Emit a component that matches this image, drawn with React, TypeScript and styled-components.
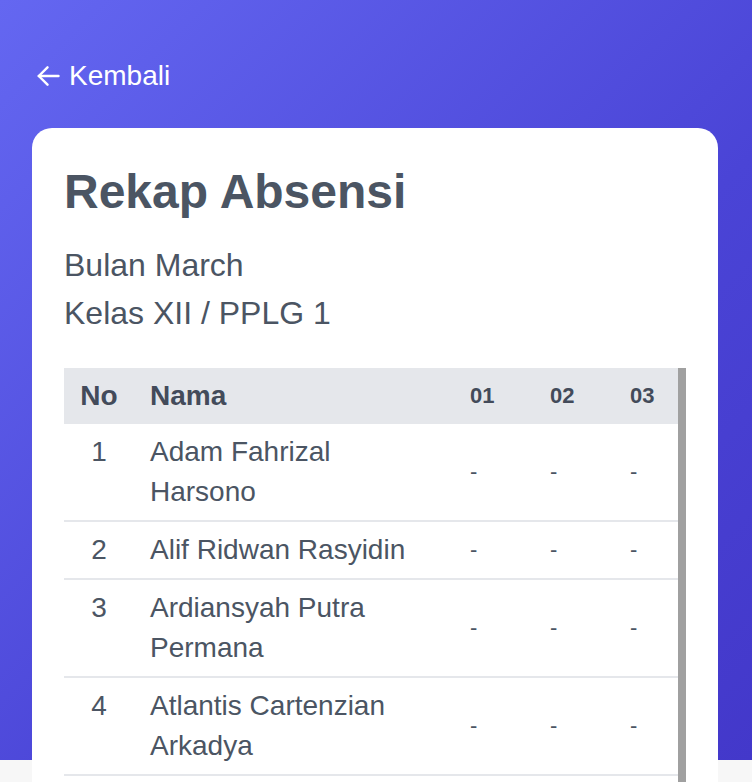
import React from "react";
import styled, { createGlobalStyle } from "styled-components";

const GlobalStyle = createGlobalStyle`
  html, body {
    margin: 0;
    padding: 0;
  }
  body {
    font-family: "Liberation Sans", Arial, Helvetica, sans-serif;
    background: #f7f7f7;
  }
  * { box-sizing: border-box; }
`;

const Page = styled.div`
  min-height: 782px;
  padding: 56px 34px 0 32px;
  background:
    linear-gradient(135deg, #6467f1 0%, #4a44d6 60%, #4338ca 100%) top left / 100% 760px no-repeat,
    #f7f7f7;
`;

const BackLink = styled.a`
  display: inline-flex;
  align-items: center;
  gap: 9px;
  margin-left: 5px;
  color: #ffffff;
  font-size: 28px;
  line-height: 40px;
  text-decoration: none;
  cursor: pointer;
`;

const Card = styled.section`
  margin-top: 32px;
  background: #ffffff;
  border-radius: 20px;
  padding: 32px;
`;

const Title = styled.h1`
  margin: 0;
  font-size: 48px;
  line-height: 64px;
  font-weight: 700;
  color: #4b5563;
`;

const Meta = styled.p`
  margin: 17px 0 0 0;
  font-size: 32px;
  line-height: 48px;
  color: #4b5563;
`;

const TableWrap = styled.div`
  margin-top: 31px;
  padding-bottom: 40px;
  overflow: hidden;
  border-right: 8px solid #a0a0a0;
`;

const Table = styled.table`
  width: 100%;
  table-layout: fixed;
  border-collapse: collapse;
`;

const HeadRow = styled.tr`
  background: #e5e7eb;
`;

const Th = styled.th<{ $align?: string; $small?: boolean; $pad?: number }>`
  padding: 8px 0 8px ${(p) => p.$pad ?? 0}px;
  text-align: ${(p) => p.$align ?? "left"};
  font-size: ${(p) => (p.$small ? 22 : 28)}px;
  line-height: 40px;
  font-weight: 700;
  color: #434b5a;
  white-space: nowrap;
`;

const Row = styled.tr`
  border-bottom: 2px solid #e5e7eb;
`;

const NoCell = styled.td`
  padding: 8px 0;
  text-align: center;
  vertical-align: top;
  font-size: 28px;
  line-height: 40px;
  color: #4b5563;
`;

const NameCell = styled.td`
  padding: 8px 16px;
  vertical-align: top;
  font-size: 28px;
  line-height: 40px;
  color: #4b5563;
`;

const DayCell = styled.td`
  padding: 8px 0 8px 28px;
  vertical-align: middle;
  font-size: 22px;
  line-height: 40px;
  color: #4b5563;
`;

const ArrowIcon = () => (
  <svg width="23" height="20" viewBox="0 0 23 20" fill="none" stroke="currentColor" strokeWidth="2.4" strokeLinecap="round" strokeLinejoin="round">
    <path d="M21.5 10H1.8" />
    <path d="M10.5 1.3 1.8 10l8.7 8.7" />
  </svg>
);

const days = ["01", "02", "03"];

const students = [
  { no: 1, name: "Adam Fahrizal Harsono" },
  { no: 2, name: "Alif Ridwan Rasyidin" },
  { no: 3, name: "Ardiansyah Putra Permana" },
  { no: 4, name: "Atlantis Cartenzian Arkadya" },
];

export default function App() {
  return (
    <>
      <GlobalStyle />
      <Page>
        <BackLink>
          <ArrowIcon />
          Kembali
        </BackLink>
        <Card>
          <Title>Rekap Absensi</Title>
          <Meta>
            Bulan March
            <br />
            Kelas XII / PPLG 1
          </Meta>
          <TableWrap>
            <Table>
              <colgroup>
                <col style={{ width: 70 }} />
                <col style={{ width: 308 }} />
                <col style={{ width: 80 }} />
                <col style={{ width: 80 }} />
                <col style={{ width: 76 }} />
              </colgroup>
              <thead>
                <HeadRow>
                  <Th $align="center">No</Th>
                  <Th $pad={16}>Nama</Th>
                  {days.map((d) => (
                    <Th key={d} $small $pad={28}>
                      {d}
                    </Th>
                  ))}
                </HeadRow>
              </thead>
              <tbody>
                {students.map((s) => (
                  <Row key={s.no}>
                    <NoCell>{s.no}</NoCell>
                    <NameCell>{s.name}</NameCell>
                    {days.map((d) => (
                      <DayCell key={d}>-</DayCell>
                    ))}
                  </Row>
                ))}
              </tbody>
            </Table>
          </TableWrap>
        </Card>
      </Page>
    </>
  );
}
